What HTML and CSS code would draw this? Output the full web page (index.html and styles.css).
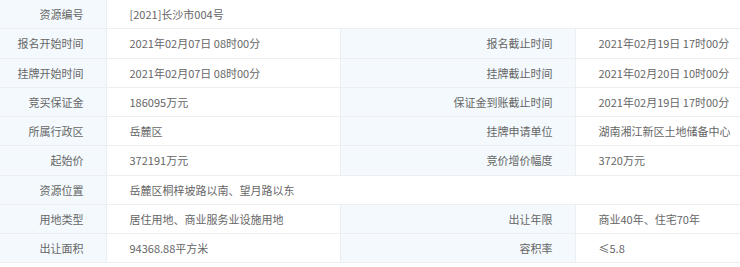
FILE: index.html
```html
<!DOCTYPE html>
<html>
<head>
<meta charset="utf-8">
<link rel="stylesheet" href="styles.css">
</head>
<body>
<table class="info">
  <colgroup>
    <col class="c-label1"><col class="c-val1"><col class="c-label2"><col class="c-val2">
  </colgroup>
  <tr><th>资源编号</th><td colspan="3">[2021]长沙市004号</td></tr>
  <tr><th>报名开始时间</th><td>2021年02月07日 08时00分</td><th>报名截止时间</th><td>2021年02月19日 17时00分</td></tr>
  <tr><th>挂牌开始时间</th><td>2021年02月07日 08时00分</td><th>挂牌截止时间</th><td>2021年02月20日 10时00分</td></tr>
  <tr><th>竞买保证金</th><td>186095万元</td><th>保证金到账截止时间</th><td>2021年02月19日 17时00分</td></tr>
  <tr><th>所属行政区</th><td>岳麓区</td><th>挂牌申请单位</th><td>湖南湘江新区土地储备中心</td></tr>
  <tr><th>起始价</th><td>372191万元</td><th>竞价增价幅度</th><td>3720万元</td></tr>
  <tr><th>资源位置</th><td colspan="3">岳麓区桐梓坡路以南、望月路以东</td></tr>
  <tr><th>用地类型</th><td>居住用地、商业服务业设施用地</td><th>出让年限</th><td>商业40年、住宅70年</td></tr>
  <tr><th>出让面积</th><td>94368.88平方米</td><th>容积率</th><td>≤5.8</td></tr>
</table>
</body>
</html>
```
FILE: styles.css
```css
html, body {
  margin: 0;
  padding: 0;
  background: #fff;
}
.info {
  width: 740px;
  border-collapse: collapse;
  table-layout: fixed;
  font-family: "Noto Sans CJK SC", "Noto Sans", sans-serif;
  font-size: 11px;
  color: #666;
}
.c-label1 { width: 106px; }
.c-val1 { width: 234px; }
.c-label2 { width: 235px; }
.c-val2 { width: 165px; }
.info th, .info td {
  height: 28.25px;
  padding: 0;
  border-bottom: 1px solid #eceef2;
  border-right: 1px solid #eceef2;
  white-space: nowrap;
  font-weight: normal;
  vertical-align: middle;
}
.info th {
  background: #f3f9fd;
  text-align: right;
  padding-right: 22px;
}
.info td {
  text-align: left;
  padding-left: 23px;
}
```
